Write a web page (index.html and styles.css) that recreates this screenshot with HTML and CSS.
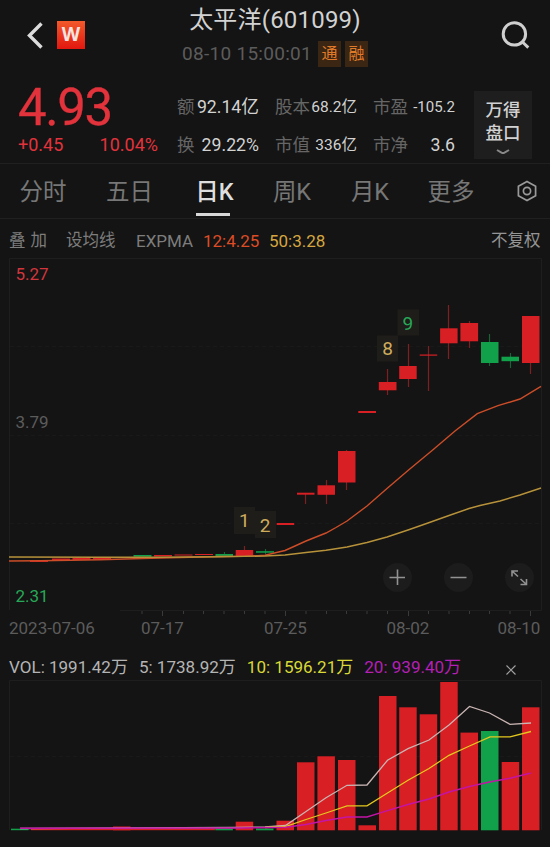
FILE: index.html
```html
<!DOCTYPE html>
<html lang="zh-CN">
<head>
    <meta charset="UTF-8">
    <meta name="viewport" content="width=device-width, initial-scale=1.0">
    <title>太平洋(601099)</title>
    <link rel="stylesheet" href="styles.css">
</head>
<body>
    <header class="header">
        <div class="header-left">
            <svg class="back-icon" viewBox="0 0 18 28"><path d="M15.5 2.5 L3.5 14.5 L15.5 26.5"/></svg>
            <span class="logo">W</span>
        </div>
        <div class="header-title">
            <h1>太平洋(601099)</h1>
            <div class="header-sub">
                <span class="time">08-10 15:00:01</span>
                <span class="tag">通</span>
                <span class="tag">融</span>
            </div>
        </div>
        <svg class="search-icon" viewBox="0 0 30 30"><circle cx="13.4" cy="12.9" r="11.2"/><path d="M21.5 21 L27.3 26.6"/></svg>
    </header>

    <section class="quote">
        <div class="price-box">
            <div class="price">4.93</div>
            <div class="change"><span>+0.45</span><span>10.04%</span></div>
        </div>
        <div class="stats">
            <div class="stat"><span>额</span><b>92.14亿</b></div>
            <div class="stat small"><span>股本</span><b>68.2亿</b></div>
            <div class="stat tiny"><span>市盈</span><b>-105.2</b></div>
            <div class="stat"><span>换</span><b>29.22%</b></div>
            <div class="stat small"><span>市值</span><b>336亿</b></div>
            <div class="stat"><span>市净</span><b>3.6</b></div>
        </div>
        <div class="pankou">
            <span>万得</span>
            <span>盘口</span>
            <svg viewBox="0 0 14 6"><path d="M1 1 L5.5 3.700 Q7 4.500 8.500 3.700 L13 1"/></svg>
        </div>
    </section>

    <nav class="tabs">
        <span class="tab">分时</span>
        <span class="tab">五日</span>
        <span class="tab active">日K</span>
        <span class="tab">周K</span>
        <span class="tab">月K</span>
        <span class="tab">更多</span>
        <svg class="setting-icon" viewBox="0 0 20 22"><path d="M10 1.4 L18.6 6.2 V15.8 L10 20.6 L1.4 15.8 V6.2 Z"/><circle cx="10" cy="11" r="3.6"/></svg>
    </nav>

    <div class="indicators">
        <span class="overlay">叠 加</span>
        <span class="ma">设均线</span>
        <span class="expma">EXPMA</span>
        <span class="ema12">12:4.25</span>
        <span class="ema50">50:3.28</span>
        <span class="fuquan">不复权</span>
    </div>

    <!-- K线图 -->
    <svg class="k-chart" viewBox="0 258 550 394">
        <path class="frame" d="M9.5 610 V258.5 H541.5 V610"/>
        <path class="frame" d="M120 610.5 H541.5"/>
        <path class="grid-line" d="M10 346.5 H541 M10 435.5 H541 M10 523.5 H541"/>
        <path class="ticks" d="M142 611v3 M183.5 611v3 M203.5 611v3 M224 611v3 M244.5 611v3 M265 611v3 M306 611v3 M326.5 611v3 M346.5 611v3 M367 611v3 M387.5 611v3 M428.5 611v3 M449 611v3 M469.5 611v3 M489.5 611v3 M510 611v3 M162.5 611v5 M285.5 611v5 M408.5 611v5 M530.5 611v5"/>

        <g class="wick-up">
            <path d="M244.5 546v4 M305.5 494v10 M326.5 480v24 M346.5 450v40 M387.5 369v26 M408.5 344v43 M428.5 346v45 M448.5 305v54 M469.5 321v27 M530.5 316v58"/>
        </g>
        <g class="wick-down">
            <path d="M265.5 549v5 M224.5 552v5 M489.5 334v32 M510.5 353v15"/>
        </g>
        <g class="up">
            <rect x="30" y="560.3" width="18" height="1.7"/>
            <rect x="52" y="558.5" width="18" height="2"/>
            <rect x="72.5" y="558" width="18" height="2"/>
            <rect x="93" y="558" width="18" height="1.7"/>
            <rect x="154" y="555" width="18" height="1.5"/>
            <rect x="174.5" y="554.5" width="18" height="1"/>
            <rect x="195" y="554" width="18" height="1"/>
            <rect x="235.7" y="550" width="17.5" height="6.5"/>
            <rect x="276.7" y="523" width="17.5" height="2"/>
            <rect x="297" y="492.7" width="17.5" height="2"/>
            <rect x="317.5" y="485.3" width="17.5" height="9.5"/>
            <rect x="338" y="451" width="17.5" height="31.5"/>
            <rect x="358.3" y="411" width="17.7" height="2"/>
            <rect x="378.8" y="382" width="17.7" height="8.3"/>
            <rect x="399.2" y="366" width="17.5" height="13"/>
            <rect x="419.7" y="354.5" width="17.5" height="1.2"/>
            <rect x="440.1" y="328.3" width="17.5" height="15"/>
            <rect x="460.4" y="323" width="17.7" height="18.3"/>
            <rect x="522" y="316" width="17.5" height="47"/>
        </g>
        <g class="down">
            <rect x="133.5" y="555" width="18" height="1.7"/>
            <rect x="215.5" y="554" width="17.5" height="2"/>
            <rect x="256" y="551.2" width="18" height="1.5"/>
            <rect x="481" y="342" width="17.5" height="21"/>
            <rect x="501.5" y="356.7" width="17.5" height="4.5"/>
        </g>

        <path class="line-ema12" d="M9 561 L40 560.7 L100 559.7 L160 558 L220 556.5 L245 556.3 L265 555.3 L285 550.5 L295 546 L306 541 L326 533 L336 527.5 L347 521 L367 506 L387 488.5 L408 470.5 L432.7 450 L455 431 L477.3 413.7 L498 405.7 L520 399 L541 386.3"/>
        <path class="line-ema50" d="M9 557 L100 557.3 L160 557.3 L220 556.8 L265 556 L285 555 L306 552.5 L326 550.3 L347 547 L367 542.5 L387 537 L408 530 L428 523 L449 515.5 L469 508.5 L480 505.5 L500 501 L520 495 L541 488"/>

        <!-- 九转序列 -->
        <g class="mark-bg">
            <rect x="234" y="507" width="21" height="27"/>
            <rect x="255" y="511" width="21" height="27"/>
            <rect x="377" y="335.5" width="21" height="26"/>
            <rect x="397.5" y="309.5" width="21.5" height="26"/>
        </g>
        <g class="mark">
            <text x="244.3" y="527">1</text>
            <text x="265" y="531.5">2</text>
            <text x="387.5" y="355">8</text>
            <text class="mark-green" x="407.8" y="329.5">9</text>
        </g>

        <text class="high" x="15.5" y="280">5.27</text>
        <text class="axis" x="15.5" y="428">3.79</text>
        <text class="low" x="15.5" y="602">2.31</text>
        <g class="axis">
            <text x="9" y="633.5">2023-07-06</text>
            <text x="141" y="633.5">07-17</text>
            <text x="264" y="633.5">07-25</text>
            <text x="386.5" y="633.5">08-02</text>
            <text x="497.5" y="633.5">08-10</text>
        </g>

        <g class="zoom-bg">
            <circle cx="397.5" cy="577.5" r="14.5"/>
            <circle cx="458.5" cy="577.5" r="14.5"/>
            <circle cx="519.5" cy="577.5" r="14.5"/>
        </g>
        <path class="zoom-icon" d="M389.5 577.5 h15.5 M397.5 569.5 v15.5 M450.5 577.5 h16"/>
        <path class="zoom-icon" d="M512 576.5 v-5.5 h6 M512.5 571.5 l5.5 5 M520.5 579 l5.5 5 M526.5 579 v5.5 h-6"/>
    </svg>

    <div class="vol-legend">
        <span>VOL: 1991.42万</span>
        <span>5: 1738.92万</span>
        <span class="vol10">10: 1596.21万</span>
        <span class="vol20">20: 939.40万</span>
        <svg class="close-icon" viewBox="0 0 12 12"><path d="M1.5 1.5 L10.5 10.5 M10.5 1.5 L1.5 10.5"/></svg>
    </div>

    <!-- 成交量 -->
    <svg class="vol-chart" viewBox="0 680 550 167">
        <path class="frame" d="M9.5 830 V680.5 H541.5 V830"/>
        <path class="grid-line" d="M10 756.5 H541"/>
        <g class="up">
            <rect x="31" y="828.5" width="184" height="1.7"/>
            <rect x="113" y="826.5" width="17.5" height="3.8"/>
            <rect x="235.7" y="821.7" width="17.5" height="8.6"/>
            <rect x="276.5" y="820.7" width="17.5" height="9.6"/>
            <rect x="297" y="762.3" width="17.5" height="68"/>
            <rect x="317.4" y="756.3" width="17.5" height="74"/>
            <rect x="338" y="760" width="17.5" height="70.3"/>
            <rect x="358.5" y="825.3" width="17.5" height="5"/>
            <rect x="379" y="696" width="17.5" height="134.3"/>
            <rect x="399.2" y="707.3" width="17.5" height="123"/>
            <rect x="419.7" y="714.3" width="17.5" height="116"/>
            <rect x="440.2" y="682" width="17.5" height="148.3"/>
            <rect x="460.5" y="732.6" width="17.5" height="97.7"/>
            <rect x="501.7" y="762" width="17.5" height="68.3"/>
            <rect x="522" y="707.3" width="17.5" height="123"/>
        </g>
        <g class="down">
            <rect x="11" y="828.7" width="17.5" height="1.5"/>
            <rect x="215.3" y="828.5" width="17.5" height="1.8"/>
            <rect x="256" y="828.5" width="17.5" height="1.8"/>
            <rect x="481" y="731" width="17.5" height="99.3"/>
        </g>
        <path class="line-vol5" d="M20 828.5 L235 827.5 L265 827 L285.5 825.5 L306 811.5 L326 797.7 L347 785.3 L367 785 L387.5 760.3 L408 748.7 L429 740 L449 725 L469.5 706.5 L489.5 713 L510 724.3 L531 723"/>
        <path class="line-vol10" d="M265 827.5 L285.5 826.5 L306 819.5 L326 813 L347 805.8 L367 805.8 L387.5 793 L408 780.3 L429 768.5 L449 755.3 L469.5 746 L490 736.8 L510 736.8 L531 731.5"/>
        <path class="line-vol20" d="M20 828.3 L235 828 L285.5 827.3 L306 824.5 L326 820.5 L347 817 L367 817 L387.5 810.7 L408 804.5 L429 799 L449 792 L469.5 786.5 L489.5 782 L510 778.3 L531 773"/>
    </svg>
</body>
</html>
```
FILE: styles.css
```css
:root {
    --bg: #141414;
    --red: #e2333c;
    --candle-red: #d71f24;
    --candle-green: #12a14b;
    --text: #d2d2d2;
    --muted: #666;
    --line: #202020;
}

* {
    margin: 0;
    padding: 0;
    box-sizing: border-box;
}

body {
    width: 550px;
    height: 847px;
    overflow: hidden;
    background: var(--bg);
    color: var(--text);
    font-family: Roboto, "Noto Sans CJK SC", sans-serif;
}

svg {
    display: block;
    fill: none;
    flex-shrink: 0;
}

/* 顶部 */
.header {
    display: grid;
    grid-template-columns: 160px 1fr 160px;
    height: 82px;
}

.header-left {
    display: flex;
    align-items: flex-start;
    padding: 21px 0 0 26px;
    gap: 13px;
}

.back-icon {
    width: 18px;
    height: 28px;
    stroke: #dcdcdc;
    stroke-width: 3.4;
}

.logo {
    width: 28px;
    height: 28px;
    background: linear-gradient(#f2592b, #e3170f);
    color: #f6e4e0;
    font-family: "Open Sans", sans-serif;
    font-size: 19px;
    font-weight: 700;
    line-height: 27px;
    text-align: center;
}

.header-title {
    display: flex;
    flex-direction: column;
    align-items: center;
    padding-top: 5px;
}

.header-title h1 {
    font-size: 24px;
    font-weight: 400;
    line-height: 30px;
    letter-spacing: 0.2px;
    white-space: nowrap;
}

.header-sub {
    display: flex;
    align-items: center;
    margin-top: 6px;
    gap: 4px;
}

.time {
    color: #5c5c5c;
    font-size: 19px;
    letter-spacing: 0.3px;
    line-height: 26px;
    margin-right: 2px;
    white-space: nowrap;
}

.tag {
    width: 23px;
    height: 26px;
    background: #3b2613;
    color: #e07a28;
    font-size: 16px;
    line-height: 25px;
    text-align: center;
}

.search-icon {
    width: 30px;
    height: 30px;
    margin: 21px 0 0 111px;
    stroke: #cfcfcf;
    stroke-width: 3;
}

/* 行情 */
.quote {
    display: grid;
    grid-template-columns: 177px 297px 58px;
    height: 82px;
    border-bottom: 1px solid var(--line);
}

.price-box {
    color: var(--red);
    padding-left: 18px;
}

.price {
    font-size: 51px;
    line-height: 51px;
    letter-spacing: -1.4px;
    -webkit-text-stroke: 0.3px var(--red);
}

.change {
    display: flex;
    width: 140px;
    justify-content: space-between;
    font-size: 18px;
    line-height: 22px;
    margin-top: 1px;
}

.stats {
    display: grid;
    grid-template-columns: 82px 82px 82px;
    grid-template-rows: 38px 38px;
    column-gap: 16px;
    padding-top: 6px;
}

.stat {
    display: flex;
    height: 38px;
    justify-content: space-between;
    align-items: center;
    line-height: 38px;
    white-space: nowrap;
}

.stat span {
    color: var(--muted);
    font-size: 17.5px;
}

.stat b {
    font-size: 17.7px;
    font-weight: 400;
}

.stat.small b {
    font-size: 15.5px;
}

.stat.tiny b {
    font-size: 15px;
}

.pankou {
    display: flex;
    flex-direction: column;
    align-items: center;
    height: 68px;
    margin-top: 9px;
    padding-top: 8px;
    background: #1e1e1e;
    font-size: 17.5px;
    font-weight: 500;
    line-height: 22.5px;
}

.pankou svg {
    width: 14px;
    height: 6px;
    margin-top: 5px;
    stroke: #888;
    stroke-width: 2;
}

/* 周期 */
.tabs {
    display: grid;
    grid-template-columns: 86px 87px 83px 72px 84px 78px 48px;
    height: 55px;
    border-bottom: 1px solid var(--line);
}

.tab {
    color: #777;
    font-size: 23.5px;
    line-height: 56px;
    height: 54px;
    text-align: center;
}

.tab.active {
    color: #dedede;
    font-weight: 500;
    background: linear-gradient(#d8d8d8, #d8d8d8) 23px 49px / 34px 3px no-repeat;
}

.setting-icon {
    width: 20px;
    height: 22px;
    margin: 16px 0 0 27px;
    stroke: #9a9a9a;
    stroke-width: 1.7;
}

/* 指标 */
.indicators {
    display: grid;
    grid-template-columns: 57px 70px 67px 66px 222px 50px;
    padding-left: 9px;
    height: 39px;
    color: #7d7d7d;
    font-size: 16.5px;
    line-height: 44px;
    white-space: nowrap;
}

.overlay {
    font-size: 16.5px;
    word-spacing: 1px;
}

.expma {
    font-size: 17px;
}

.ema12 {
    color: #dd4c25;
    font-size: 17px;
}

.ema50 {
    color: #d6a740;
    font-size: 17px;
}

.fuquan {
    color: #959595;
}

/* 图表 */
.k-chart {
    width: 550px;
    height: 394px;
}

.frame {
    stroke: #1e1e1e;
}

.grid-line {
    stroke: #191919;
    stroke-dasharray: 4 3;
}

.ticks {
    stroke: #3a3a3a;
}

.wick-up {
    stroke: #7d2024;
    stroke-width: 1.2;
}

.wick-down {
    stroke: #1b6136;
    stroke-width: 1.2;
}

.up {
    fill: var(--candle-red);
}

.down {
    fill: var(--candle-green);
}

.line-ema12 {
    stroke: #cc4d28;
    stroke-width: 1.4;
}

.line-ema50 {
    stroke: #b7923a;
    stroke-width: 1.4;
}

.mark-bg {
    fill: #1e1d1a;
}

.mark {
    fill: #cfac5c;
    font-size: 19px;
    text-anchor: middle;
}

.mark-green {
    fill: #27a857;
}

.axis,
.high,
.low {
    font-size: 17px;
}

.axis {
    fill: #5c5c5c;
}

.high {
    fill: #d2363c;
}

.low {
    fill: #27a857;
}

.zoom-bg {
    fill: #1c1c1c;
}

.zoom-icon {
    stroke: #929292;
    stroke-width: 1.6;
}

/* 成交量 */
.vol-legend {
    display: flex;
    align-items: center;
    height: 28px;
    padding-left: 9px;
    gap: 11px;
    color: #b4b4b4;
    font-size: 17.05px;
    line-height: 32px;
    padding-top: 2px;
    white-space: nowrap;
}

.vol10 {
    color: #d9d937;
}

.vol20 {
    color: #b51fb5;
}

.close-icon {
    width: 12px;
    height: 12px;
    margin: 6px 0 0 33px;
    stroke: #a0a0a0;
    stroke-width: 1.2;
}

.vol-chart {
    width: 550px;
    height: 167px;
}

.line-vol5 {
    stroke: #c9b5b3;
    stroke-width: 1.3;
}

.line-vol10 {
    stroke: #e4c81e;
    stroke-width: 1.3;
}

.line-vol20 {
    stroke: #c414a6;
    stroke-width: 1.4;
}
```
